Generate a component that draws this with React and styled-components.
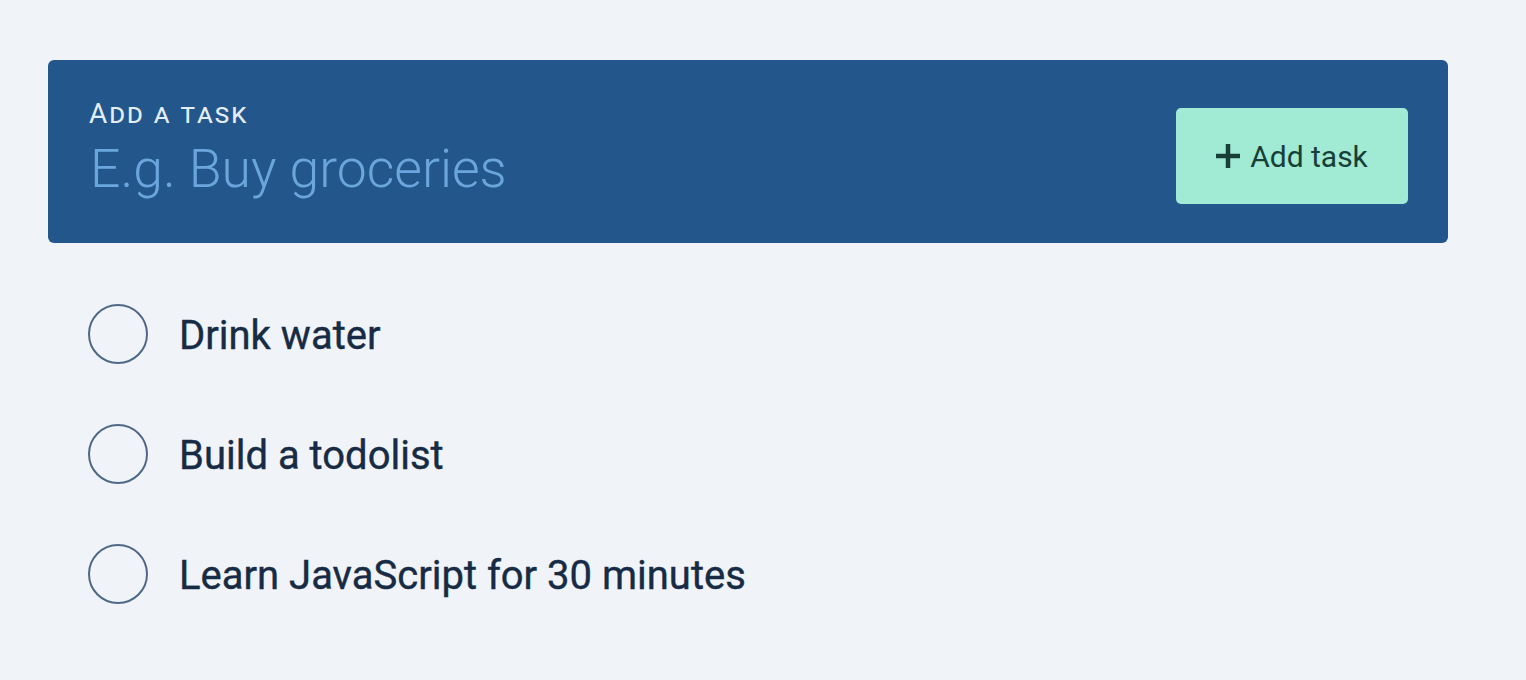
import React, { useState } from 'react'
import styled, { createGlobalStyle } from 'styled-components'

const GlobalStyle = createGlobalStyle`
  body {
    margin: 0;
    background: #f0f4f9;
    font-family: Roboto, 'Liberation Sans', sans-serif;
  }
`

const Page = styled.main`
  padding: 60px 48px;
`

const Wrapper = styled.div`
  width: 1400px;
`

const AddPanel = styled.form`
  display: flex;
  align-items: center;
  justify-content: space-between;
  background: #23568a;
  border-radius: 6px;
  padding: 41px 40px 32px 42px;
`

const Field = styled.label`
  display: flex;
  flex-direction: column;
  flex: 1;
`

const FieldLabel = styled.span`
  font-variant: small-caps;
  font-size: 28px;
  line-height: 26px;
  color: #e4edf7;
  letter-spacing: 2px;
  margin-left: -1px;
`

const TaskInput = styled.input`
  border: none;
  outline: none;
  background: transparent;
  padding: 0;
  font-family: Roboto, 'Liberation Sans', sans-serif;
  font-weight: 300;
  font-size: 53.5px;
  line-height: 84px;
  height: 84px;
  color: #eef3f9;
  &::placeholder {
    color: #6aa6dc;
  }
`

const AddButton = styled.button`
  display: flex;
  align-items: center;
  justify-content: center;
  gap: 10px;
  width: 232px;
  height: 96px;
  border: none;
  border-radius: 5px;
  background: #a1ead3;
  color: #173f38;
  font-family: Roboto, 'Liberation Sans', sans-serif;
  font-size: 30px;
  cursor: pointer;
`

const TaskList = styled.ul`
  list-style: none;
  margin: 0;
  padding: 61px 0 0 40px;
  display: flex;
  flex-direction: column;
  gap: 60px;
`

const TaskRow = styled.li`
  display: flex;
  align-items: center;
  gap: 31px;
  height: 60px;
`

const Check = styled.button`
  width: 60px;
  height: 60px;
  border-radius: 50%;
  border: 2px solid #4d6888;
  background: transparent;
  padding: 0;
  flex-shrink: 0;
  cursor: pointer;
`

const TaskText = styled.span`
  font-size: 40px;
  font-weight: 400;
  color: #172b45;
  padding-top: 2px;
  -webkit-text-stroke: 0.4px #172b45;
`

const tasks = ['Drink water', 'Build a todolist', 'Learn JavaScript for 30 minutes']

export default function App() {
  const [text, setText] = useState('')

  return (
    <>
      <GlobalStyle />
      <Page>
        <Wrapper>
          <AddPanel onSubmit={(e) => e.preventDefault()}>
            <Field>
              <FieldLabel>Add a task</FieldLabel>
              <TaskInput
                placeholder="E.g. Buy groceries"
                value={text}
                onChange={(e) => setText(e.target.value)}
              />
            </Field>
            <AddButton type="submit">
              <svg width="24" height="24" viewBox="0 0 24 24">
                <path d="M12 0v24M0 12h24" stroke="#173f38" strokeWidth="4.5" />
              </svg>
              Add task
            </AddButton>
          </AddPanel>
          <TaskList>
            {tasks.map((t) => (
              <TaskRow key={t}>
                <Check type="button" aria-label="Complete task" />
                <TaskText>{t}</TaskText>
              </TaskRow>
            ))}
          </TaskList>
        </Wrapper>
      </Page>
    </>
  )
}
